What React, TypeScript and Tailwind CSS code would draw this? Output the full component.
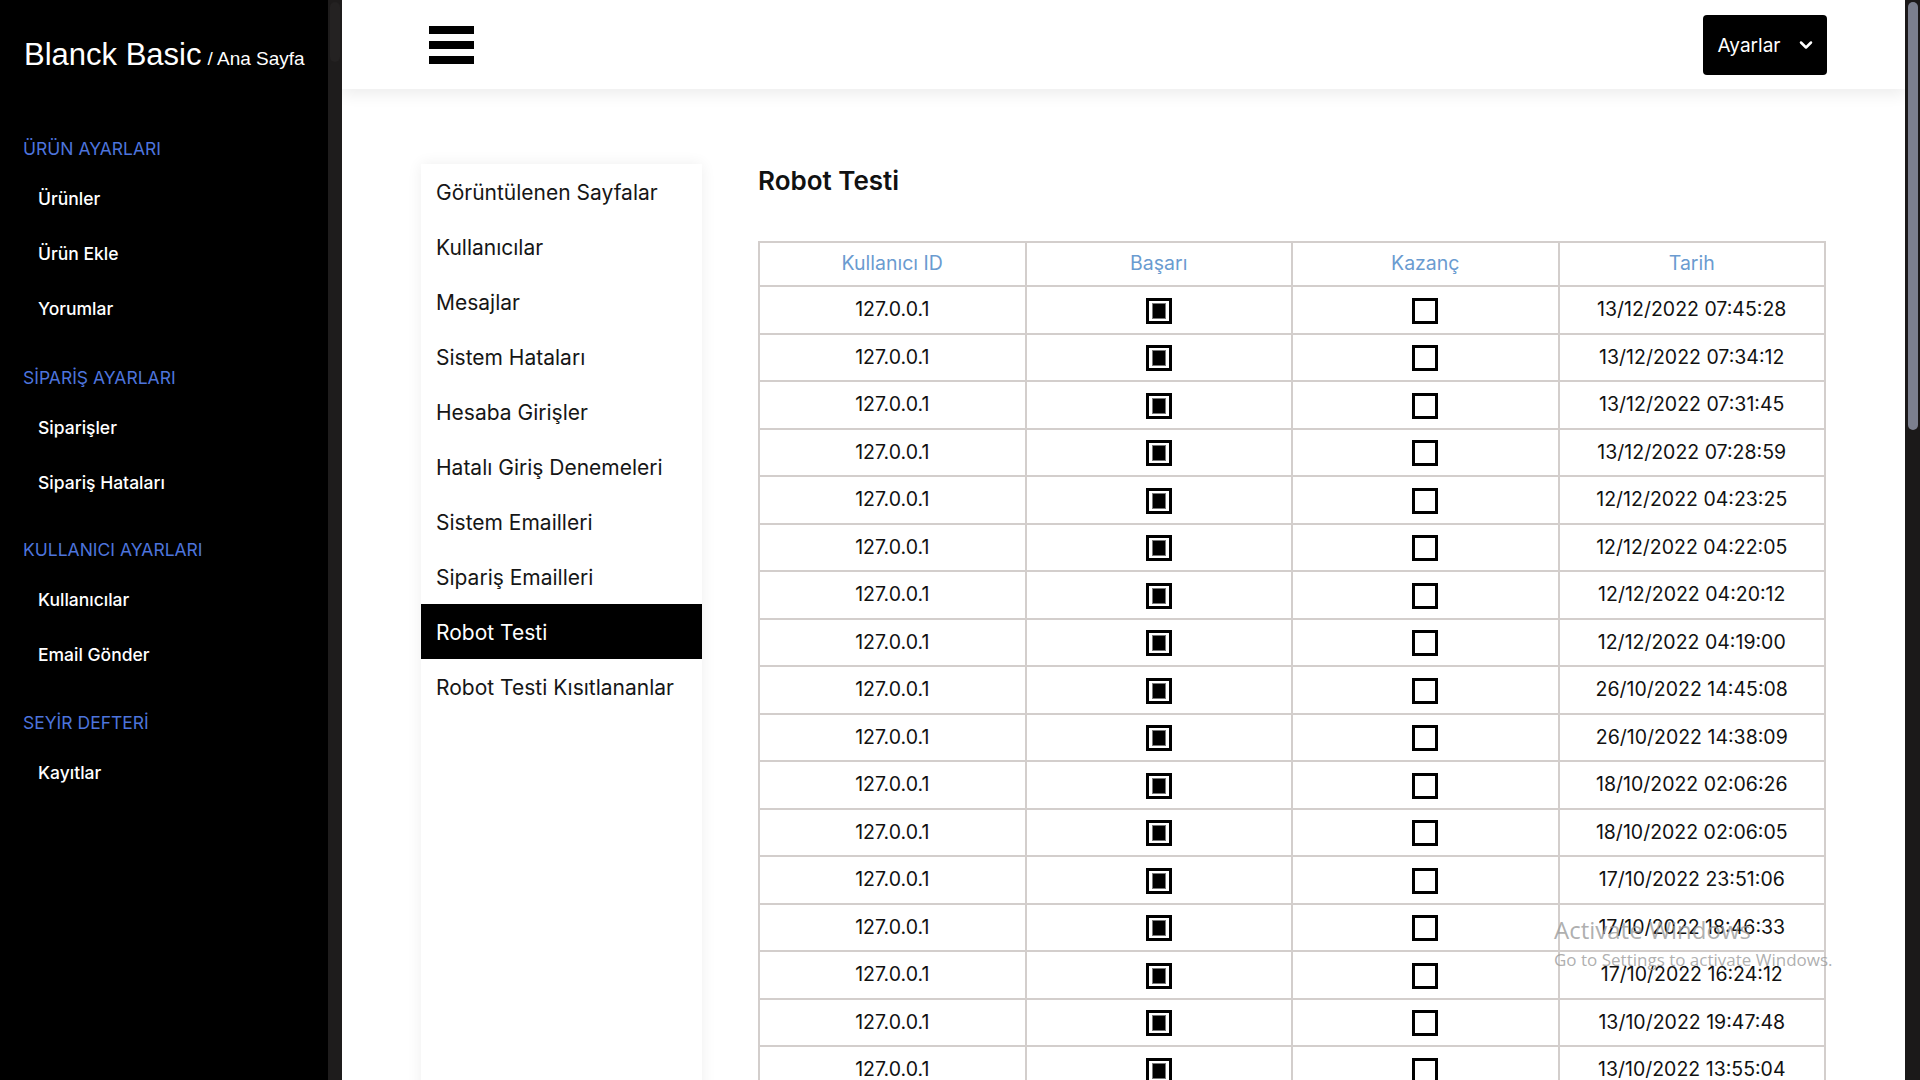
import { ChevronDown } from "lucide-react";

const SECTIONS = [
  { title: "ÜRÜN AYARLARI", items: ["Ürünler", "Ürün Ekle", "Yorumlar"], mt: "mt-[61px]" },
  { title: "SİPARİŞ AYARLARI", items: ["Siparişler", "Sipariş Hataları"], mt: "mt-[29px]" },
  { title: "KULLANICI AYARLARI", items: ["Kullanıcılar", "Email Gönder"], mt: "mt-[27px]" },
  { title: "SEYİR DEFTERİ", items: ["Kayıtlar"], mt: "mt-[28px]" },
];

const SUBNAV = [
  "Görüntülenen Sayfalar",
  "Kullanıcılar",
  "Mesajlar",
  "Sistem Hataları",
  "Hesaba Girişler",
  "Hatalı Giriş Denemeleri",
  "Sistem Emailleri",
  "Sipariş Emailleri",
  "Robot Testi",
  "Robot Testi Kısıtlananlar",
];

const DATES = [
  "13/12/2022 07:45:28",
  "13/12/2022 07:34:12",
  "13/12/2022 07:31:45",
  "13/12/2022 07:28:59",
  "12/12/2022 04:23:25",
  "12/12/2022 04:22:05",
  "12/12/2022 04:20:12",
  "12/12/2022 04:19:00",
  "26/10/2022 14:45:08",
  "26/10/2022 14:38:09",
  "18/10/2022 02:06:26",
  "18/10/2022 02:06:05",
  "17/10/2022 23:51:06",
  "17/10/2022 18:46:33",
  "17/10/2022 16:24:12",
  "13/10/2022 19:47:48",
  "13/10/2022 13:55:04",
  "12/10/2022 22:10:41",
  "12/10/2022 21:58:17",
];

function Box({ checked }: { checked?: boolean }) {
  return (
    <span className="inline-flex h-[26px] w-[26px] items-center justify-center border-[3px] border-black bg-white align-middle">
      {checked && <span className="h-[14px] w-[12px] bg-black outline outline-1 outline-[#777]" />}
    </span>
  );
}

function Sidebar() {
  return (
    <aside className="flex h-full w-[342px] shrink-0 bg-black">
      <div className="w-[328px] pl-6 text-white">
        <div className="pt-[38px] leading-[34px] whitespace-nowrap">
          <span className="font-['Liberation_Sans',Arial,sans-serif] text-[31px]">Blanck Basic</span>
          <span className="ml-1.5 font-['Liberation_Sans',Arial,sans-serif] text-[19px]">/ Ana Sayfa</span>
        </div>
        <nav className="font-['Inter',sans-serif]">
          {SECTIONS.map((s) => (
            <div key={s.title} className={s.mt}>
              <div className="-ml-px h-6 text-[17.5px] leading-6 text-[#4d74dc]">{s.title}</div>
              <ul className="mt-[11px]">
                {s.items.map((it) => (
                  <li key={it} className="flex h-[55px] items-center pl-[14px] text-[17.5px] font-medium">
                    {it}
                  </li>
                ))}
              </ul>
            </div>
          ))}
        </nav>
      </div>
      {/* sidebar scroll track */}
      <div className="relative w-[14px] bg-[#1e1c1c]">
        <div className="absolute left-[2px] right-[2px] top-[2px] h-[60px] rounded-full bg-[#242222]" />
      </div>
    </aside>
  );
}

export default function App() {
  return (
    <div className="flex h-screen w-full overflow-hidden bg-white font-['Inter',sans-serif]">
      <Sidebar />

      <main className="relative flex min-w-0 flex-1 flex-col overflow-hidden">
        <header className="relative z-10 flex h-[89px] shrink-0 items-center justify-between bg-white pl-[87px] pr-[78px] shadow-[0_6px_14px_rgba(0,0,0,0.07)]">
          <div className="flex w-[45px] flex-col gap-[7px]">
            <span className="h-2 bg-black" />
            <span className="h-2 bg-black" />
            <span className="h-2 bg-black" />
          </div>
          <button className="flex h-[60px] w-[124px] items-center justify-center gap-[16px] rounded-[4px] bg-black pl-1 pt-[3px] text-[19px] text-white">
            Ayarlar
            <ChevronDown size={20} strokeWidth={3} className="-mt-[3px]" />
          </button>
        </header>

        <div className="flex flex-1 gap-[56px] px-[79px] pt-[75px]">
          <ul className="w-[281px] shrink-0 bg-white text-[21px] text-[#161616] shadow-[0_0_14px_rgba(0,0,0,0.07)]">
            {SUBNAV.map((n) => (
              <li
                key={n}
                className={`flex h-[55px] items-center whitespace-nowrap pl-[15px] pt-[3px] ${n === "Robot Testi" ? "bg-black text-white" : ""}`}
              >
                {n}
              </li>
            ))}
          </ul>

          <section className="min-w-0 flex-1">
            <h1 className="pt-px text-[26px] font-semibold leading-[32px] text-[#111]">Robot Testi</h1>
            <table className="mt-[44px] w-full table-fixed border-collapse text-center text-[19.5px]">
              <thead>
                <tr>
                  {["Kullanıcı ID", "Başarı", "Kazanç", "Tarih"].map((h) => (
                    <th key={h} className="h-[44px] border-2 border-[#d3cecc] font-normal text-[#6a9bd0]">
                      {h}
                    </th>
                  ))}
                </tr>
              </thead>
              <tbody className="text-[#111]">
                {DATES.map((d, i) => (
                  <tr key={i}>
                    <td className="h-[47.5px] border-2 border-[#d3cecc]">127.0.0.1</td>
                    <td className="h-[47.5px] border-2 border-[#d3cecc]">
                      <Box checked />
                    </td>
                    <td className="h-[47.5px] border-2 border-[#d3cecc]">
                      <Box />
                    </td>
                    <td className="h-[47.5px] border-2 border-[#d3cecc]">{d}</td>
                  </tr>
                ))}
              </tbody>
            </table>
          </section>
        </div>

        {/* windows watermark */}
        <div className="pointer-events-none absolute left-[1212px] top-[914px] font-['Open_Sans',sans-serif] text-[#9a9a9a]/80">
          <div className="text-[24px] leading-[32px]">Activate Windows</div>
          <div className="mt-[3px] text-[17px] leading-[22px]">Go to Settings to activate Windows.</div>
        </div>
      </main>

      {/* page scroll track */}
      <div className="relative w-[15px] shrink-0 bg-[#1b1919]">
        <div className="absolute left-[2.5px] right-[2px] top-[2px] h-[428px] rounded-full bg-[#7b7f8e]" />
      </div>
    </div>
  );
}
